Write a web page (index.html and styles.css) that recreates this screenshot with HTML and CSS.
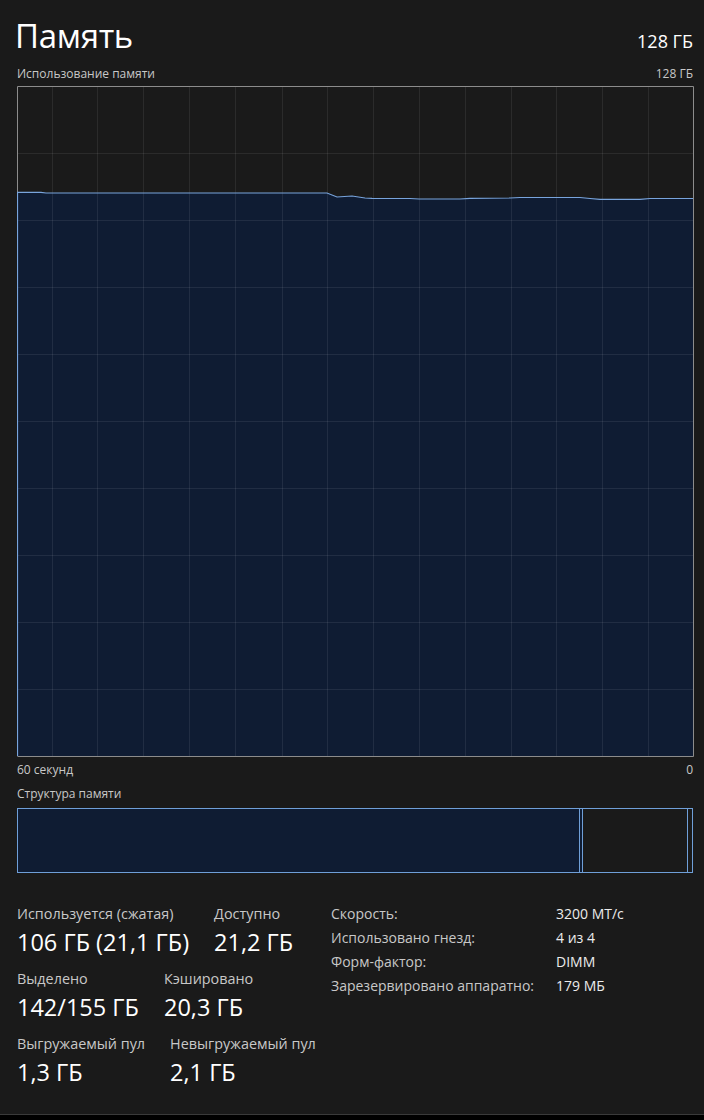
FILE: index.html
```html
<!DOCTYPE html>
<html lang="ru">
<head>
    <meta charset="UTF-8">
    <meta name="viewport" content="width=device-width, initial-scale=1.0">
    <title>Память</title>
    <link rel="stylesheet" href="styles.css">
</head>
<body>
    <div class="page">
        <div class="header">
            <h1 class="title">Память</h1>
            <div class="total">128 ГБ</div>
        </div>
        <div class="chart-caption">
            <span>Использование памяти</span>
            <span>128 ГБ</span>
        </div>

        <svg class="chart" width="677" height="671" viewBox="0 0 677 671">
            <path class="area" d="M0.5,106.3 L24,106.3 L29,107 L310,107 L320,111 L335,110 L348,112 L355,112.3 L393,112.5 L402,113 L443,113 L453,112.3 L493,112 L503,111.5 L563,111.5 L573,112.5 L583,113.3 L623,113.3 L633,112.5 L676.5,112.5 L676.5,670.5 L0.5,670.5 Z"/>
            <g class="grid">
                <line x1="35.5" y1="0" x2="35.5" y2="671"/>
                <line x1="80.5" y1="0" x2="80.5" y2="671"/>
                <line x1="126.5" y1="0" x2="126.5" y2="671"/>
                <line x1="172.5" y1="0" x2="172.5" y2="671"/>
                <line x1="218.5" y1="0" x2="218.5" y2="671"/>
                <line x1="265.5" y1="0" x2="265.5" y2="671"/>
                <line x1="310.5" y1="0" x2="310.5" y2="671"/>
                <line x1="356.5" y1="0" x2="356.5" y2="671"/>
                <line x1="402.5" y1="0" x2="402.5" y2="671"/>
                <line x1="448.5" y1="0" x2="448.5" y2="671"/>
                <line x1="494.5" y1="0" x2="494.5" y2="671"/>
                <line x1="539.5" y1="0" x2="539.5" y2="671"/>
                <line x1="585.5" y1="0" x2="585.5" y2="671"/>
                <line x1="631.5" y1="0" x2="631.5" y2="671"/>
                <line x1="0" y1="67.5" x2="677" y2="67.5"/>
                <line x1="0" y1="134.5" x2="677" y2="134.5"/>
                <line x1="0" y1="201.5" x2="677" y2="201.5"/>
                <line x1="0" y1="268.5" x2="677" y2="268.5"/>
                <line x1="0" y1="335.5" x2="677" y2="335.5"/>
                <line x1="0" y1="402.5" x2="677" y2="402.5"/>
                <line x1="0" y1="469.5" x2="677" y2="469.5"/>
                <line x1="0" y1="536.5" x2="677" y2="536.5"/>
                <line x1="0" y1="603.5" x2="677" y2="603.5"/>
            </g>
            <path class="frame" d="M0.5,106 L0.5,0.5 L676.5,0.5 L676.5,670.5 L0.5,670.5"/>
            <path class="line" d="M0.5,670 L0.5,106.3 L24,106.3 L29,107 L310,107 L320,111 L335,110 L348,112 L355,112.3 L393,112.5 L402,113 L443,113 L453,112.3 L493,112 L503,111.5 L563,111.5 L573,112.5 L583,113.3 L623,113.3 L633,112.5 L676,112.5"/>
        </svg>

        <div class="chart-axis">
            <span>60 секунд</span>
            <span>0</span>
        </div>

        <div class="struct-caption">Структура памяти</div>
        <div class="struct-bar">
            <div class="seg seg-used" style="width: 564px"></div>
            <div class="seg seg-modified" style="width: 3px"></div>
            <div class="seg" style="width: 105px"></div>
            <div class="seg" style="width: 5px"></div>
        </div>

        <div class="stats">
            <div class="stats-main">
                <div class="stat-row">
                    <div class="stat">
                        <div class="stat-label">Используется (сжатая)</div>
                        <div class="stat-value">106 ГБ (21,1 ГБ)</div>
                    </div>
                    <div class="stat">
                        <div class="stat-label">Доступно</div>
                        <div class="stat-value">21,2 ГБ</div>
                    </div>
                </div>
                <div class="stat-row">
                    <div class="stat">
                        <div class="stat-label">Выделено</div>
                        <div class="stat-value">142/155 ГБ</div>
                    </div>
                    <div class="stat">
                        <div class="stat-label">Кэшировано</div>
                        <div class="stat-value">20,3 ГБ</div>
                    </div>
                </div>
                <div class="stat-row">
                    <div class="stat">
                        <div class="stat-label">Выгружаемый пул</div>
                        <div class="stat-value">1,3 ГБ</div>
                    </div>
                    <div class="stat">
                        <div class="stat-label">Невыгружаемый пул</div>
                        <div class="stat-value">2,1 ГБ</div>
                    </div>
                </div>
            </div>

            <div class="specs">
                <div class="spec-name">Скорость:</div>
                <div class="spec-value">3200 МТ/с</div>
                <div class="spec-name">Использовано гнезд:</div>
                <div class="spec-value">4 из 4</div>
                <div class="spec-name">Форм-фактор:</div>
                <div class="spec-value">DIMM</div>
                <div class="spec-name">Зарезервировано аппаратно:</div>
                <div class="spec-value">179 МБ</div>
            </div>
        </div>
    </div>
    <div class="taskbar-edge"></div>
</body>
</html>
```

FILE: styles.css
```css
body {
    margin: 0;
    padding: 0;
    background-color: #1a1a1a;
    color: #ffffff;
    font-family: "Open Sans", "Noto Sans", sans-serif;
}

.page {
    box-sizing: border-box;
    height: 1114px;
    padding: 0 11px 0 17px;
    overflow: hidden;
}

.header {
    display: flex;
    justify-content: space-between;
    align-items: baseline;
    height: 60px;
    padding-top: 6px;
}

.title {
    margin: 0 0 0 -2px;
    font-size: 33px;
    font-weight: 400;
    line-height: 60px;
    letter-spacing: -0.3px;
}

.total {
    font-size: 18px;
}

.chart-caption {
    display: flex;
    justify-content: space-between;
    height: 20px;
    font-size: 12px;
    line-height: 16px;
    color: #c8c8c8;
}

.chart {
    display: block;
}

.chart .area {
    fill: #0f1c33;
}

.chart .grid line {
    stroke: rgba(255, 255, 255, 0.08);
    stroke-width: 1;
}

.chart .frame {
    fill: none;
    stroke: #8c8c8c;
    stroke-width: 1;
}

.chart .line {
    fill: none;
    stroke: #78a4dc;
    stroke-width: 1.2;
}

.chart-axis {
    display: flex;
    justify-content: space-between;
    height: 26px;
    font-size: 12px;
    line-height: 26px;
    color: #c8c8c8;
}

.struct-caption {
    height: 25px;
    font-size: 12px;
    line-height: 22px;
    color: #c8c8c8;
}

.struct-bar {
    display: flex;
    height: 65px;
}

.seg {
    box-sizing: border-box;
    height: 100%;
    border: 1px solid #6f9fd8;
    border-left: none;
}

.seg-used {
    border-left: 1px solid #6f9fd8;
    background: #0f1c33;
}

.seg-modified {
    background: #0f1c33;
}

.stats {
    display: flex;
    margin-top: 31px;
}

.stats-main {
    width: 314px;
}

.stat-row {
    display: flex;
    gap: 25px;
    margin-bottom: 9px;
}

.stat-label {
    font-size: 14.4px;
    line-height: 20px;
    color: #c8c8c8;
}

.stat-value {
    font-size: 23.5px;
    line-height: 36px;
}

.specs {
    display: grid;
    grid-template-columns: 225px auto;
    grid-auto-rows: 24px;
    font-size: 14px;
    line-height: 24px;
    margin-top: -2px;
}

.spec-name {
    color: #c8c8c8;
}

.spec-value {
    color: #ececec;
}

.taskbar-edge {
    height: 5px;
    background: #000000;
    border-top: 1px solid #3a3a3a;
}
```
